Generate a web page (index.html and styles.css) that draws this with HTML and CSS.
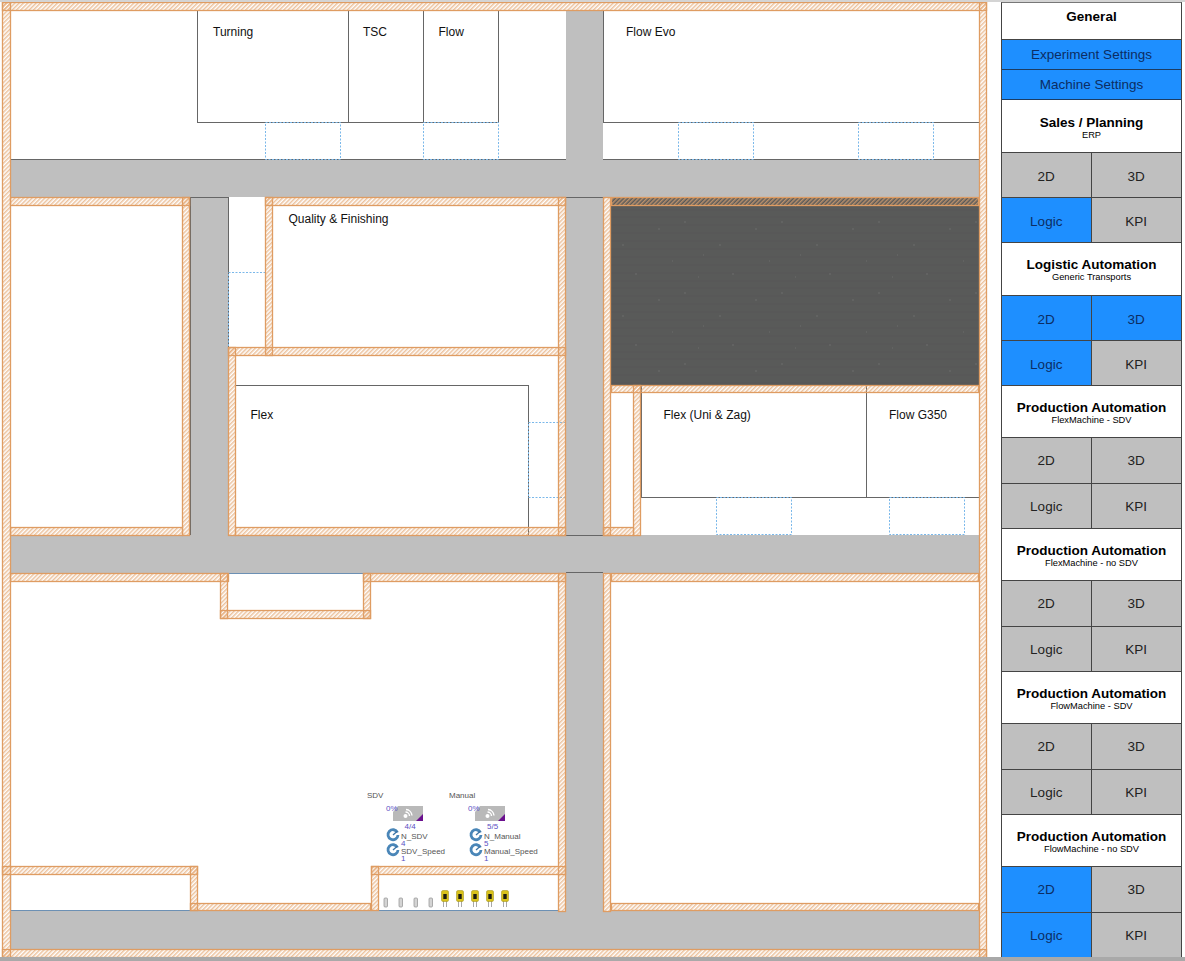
FILE: index.html
```html
<!DOCTYPE html>
<html lang="en">
<head>
<meta charset="utf-8">
<title>Factory model</title>
<link rel="stylesheet" href="styles.css">
</head>
<body>
<div class="top-strip"></div>
<main class="app">
  <svg class="plan" width="1001" height="955" viewBox="0 2 1001 955" xmlns="http://www.w3.org/2000/svg">
    <defs>
      <pattern id="hatch" width="3" height="3" patternUnits="userSpaceOnUse" patternTransform="rotate(45)">
        <rect width="1.5" height="3" class="hatch-line"/>
      </pattern>
      <pattern id="grain" width="97" height="71" patternUnits="userSpaceOnUse">
        <rect width="97" height="71" class="grain-bg"/>
        <path d="M0 4H97M0 12H97M0 20H97M0 28H97M0 36H97M0 44H97M0 52H97M0 60H97M0 68H97" class="grain-dark"/>
        <path d="M6 8v2M41 31v2M77 15v2M54 60v2M24 42h1M90 48h1M19 64h1" class="grain-light"/>
      </pattern>
      <g id="block">
        <polygon points="398,806 423,806 423,821 393,821 393,812" class="block-body"/>
        <polygon points="423,814 423,821 416,821" class="block-corner"/>
        <circle cx="405.500" cy="816" r="2" class="block-mark"/>
        <path d="M405.500 812a4 4 0 0 1 4 4M406 809.500a6.500 6.500 0 0 1 6 6" class="block-wave"/>
      </g>
      <g id="gauge">
        <path d="M397.500 832.500a5 5 0 1 0 .5 2.500" class="gauge-ring"/>
        <path d="M393 835l4.500-4" class="gauge-hand"/>
      </g>
      <g id="part-small">
        <rect x="384" y="898" width="3.500" height="9" rx="1" class="part-small"/>
      </g>
      <g id="part-yellow">
        <path d="M443.500 901v6M446.500 901v6" class="part-leg"/>
        <rect x="441.500" y="890.500" width="7" height="11" rx="1.500" class="part-body"/>
        <rect x="443.300" y="894" width="3.400" height="5" class="part-core"/>
      </g>
    </defs>

    <rect x="2" y="2" width="985" height="955" class="floor"/>

    <g class="roads">
      <rect x="566" y="10" width="37" height="150"/>
      <rect x="10" y="160" width="969" height="37"/>
      <rect x="190" y="197" width="38" height="338"/>
      <rect x="566" y="197" width="37" height="338"/>
      <rect x="10" y="535" width="969" height="38"/>
      <rect x="566" y="573" width="37" height="338"/>
      <rect x="10" y="911" width="969" height="38"/>
    </g>
    <path d="M10 159.500H566M603 159.500H979M190 197.500H228M566 197.500H603M566 535.500H603M566 572.500H603M190.500 197V535M228.500 197V347" class="road-edge"/>
    <path d="M10 910.500H190M379 910.500H558M228 573.500H363M10.500 874V911" class="blue-edge"/>

    <rect x="611" y="197" width="368" height="188" fill="url(#grain)"/>

    <g class="machines">
      <rect x="197.500" y="10.500" width="151" height="112"/>
      <rect x="348.500" y="10.500" width="75" height="112"/>
      <rect x="423.500" y="10.500" width="75" height="112"/>
      <rect x="603.500" y="10.500" width="376" height="112"/>
      <rect x="235.500" y="385.500" width="293" height="150"/>
      <rect x="641.500" y="385.500" width="225" height="112"/>
      <rect x="866.500" y="385.500" width="113" height="112"/>
    </g>

    <g class="docks">
      <rect x="265.500" y="122.500" width="75" height="37"/>
      <rect x="423.500" y="122.500" width="75" height="37"/>
      <rect x="678.500" y="122.500" width="75" height="37"/>
      <rect x="858.500" y="122.500" width="75" height="37"/>
      <rect x="228.500" y="272.500" width="37" height="75"/>
      <rect x="528.500" y="422.500" width="37" height="75"/>
      <rect x="716.500" y="497.500" width="75" height="37"/>
      <rect x="889.500" y="497.500" width="75" height="37"/>
    </g>

    <g class="walls" fill="url(#hatch)">
      <rect x="2.500" y="2.500" width="984" height="8"/>
      <rect x="2.500" y="2.500" width="8" height="955"/>
      <rect x="979.500" y="2.500" width="7" height="955"/>
      <rect x="2.500" y="949.500" width="984" height="8"/>
      <rect x="10.500" y="197.500" width="179" height="8"/>
      <rect x="182.500" y="197.500" width="7" height="338"/>
      <rect x="265.500" y="197.500" width="7" height="158"/>
      <rect x="265.500" y="197.500" width="300" height="8"/>
      <rect x="228.500" y="347.500" width="337" height="8"/>
      <rect x="228.500" y="347.500" width="7" height="188"/>
      <rect x="558.500" y="197.500" width="7" height="338"/>
      <rect x="603.500" y="197.500" width="7" height="338"/>
      <rect x="611.500" y="197.500" width="367" height="8"/>
      <rect x="611.500" y="385.500" width="367" height="7"/>
      <rect x="633.500" y="385.500" width="7" height="150"/>
      <rect x="603.500" y="527.500" width="30" height="8"/>
      <rect x="10.500" y="527.500" width="172" height="8"/>
      <rect x="235.500" y="527.500" width="330" height="8"/>
      <rect x="10.500" y="573.500" width="218" height="8"/>
      <rect x="363.500" y="573.500" width="202" height="8"/>
      <rect x="220.500" y="573.500" width="7" height="45"/>
      <rect x="363.500" y="573.500" width="7" height="45"/>
      <rect x="220.500" y="610.500" width="150" height="8"/>
      <rect x="558.500" y="573.500" width="7" height="338"/>
      <rect x="603.500" y="573.500" width="7" height="338"/>
      <rect x="611.500" y="573.500" width="367" height="8"/>
      <rect x="611.500" y="903.500" width="367" height="7"/>
      <rect x="2.500" y="866.500" width="195" height="8"/>
      <rect x="190.500" y="866.500" width="7" height="44"/>
      <rect x="190.500" y="903.500" width="180" height="7"/>
      <rect x="371.500" y="866.500" width="7" height="44"/>
      <rect x="371.500" y="866.500" width="194" height="8"/>
    </g>

    <g class="labels">
      <text x="213" y="36">Turning</text>
      <text x="363" y="36">TSC</text>
      <text x="438.500" y="36">Flow</text>
      <text x="626" y="36">Flow Evo</text>
      <text x="288.500" y="223">Quality &amp; Finishing</text>
      <text x="250.500" y="419">Flex</text>
      <text x="663.500" y="419">Flex (Uni &amp; Zag)</text>
      <text x="889" y="419">Flow G350</text>
    </g>

    <use href="#block"/>
    <use href="#block" x="82"/>
    <use href="#gauge"/>
    <use href="#gauge" y="15"/>
    <use href="#gauge" x="83"/>
    <use href="#gauge" x="83" y="15"/>

    <g class="small-labels">
      <text x="367" y="798">SDV</text>
      <text x="449" y="798">Manual</text>
      <text x="401" y="839">N_SDV</text>
      <text x="401" y="854">SDV_Speed</text>
      <text x="484" y="839">N_Manual</text>
      <text x="484" y="854">Manual_Speed</text>
    </g>
    <g class="values">
      <text x="386" y="811">0%</text>
      <text x="468" y="811">0%</text>
      <text x="404.500" y="828.500">4/4</text>
      <text x="487" y="828.500">5/5</text>
      <text x="401" y="846">4</text>
      <text x="401" y="861">1</text>
      <text x="484" y="846">5</text>
      <text x="484" y="861">1</text>
    </g>

    <use href="#part-small"/>
    <use href="#part-small" x="15"/>
    <use href="#part-small" x="30"/>
    <use href="#part-small" x="45"/>
    <use href="#part-yellow"/>
    <use href="#part-yellow" x="15"/>
    <use href="#part-yellow" x="30"/>
    <use href="#part-yellow" x="45"/>
    <use href="#part-yellow" x="60"/>
  </svg>

  <aside class="panel">
    <header class="head head-general"><strong>General</strong></header>
    <div class="wide on">Experiment Settings</div>
    <div class="wide on">Machine Settings</div>

    <header class="head"><strong class="nudge">Sales / Planning</strong><small>ERP</small></header>
    <div class="views">
      <div class="cell">2D</div><div class="cell">3D</div>
      <div class="cell on">Logic</div><div class="cell">KPI</div>
    </div>

    <header class="head"><strong>Logistic Automation</strong><small>Generic Transports</small></header>
    <div class="views">
      <div class="cell on">2D</div><div class="cell on">3D</div>
      <div class="cell on">Logic</div><div class="cell">KPI</div>
    </div>

    <header class="head head-prod"><strong>Production Automation</strong><small>FlexMachine - SDV</small></header>
    <div class="views views-prod">
      <div class="cell">2D</div><div class="cell">3D</div>
      <div class="cell">Logic</div><div class="cell">KPI</div>
    </div>

    <header class="head head-prod"><strong>Production Automation</strong><small>FlexMachine - no SDV</small></header>
    <div class="views views-prod">
      <div class="cell">2D</div><div class="cell">3D</div>
      <div class="cell">Logic</div><div class="cell">KPI</div>
    </div>

    <header class="head head-prod"><strong>Production Automation</strong><small>FlowMachine - SDV</small></header>
    <div class="views views-prod">
      <div class="cell">2D</div><div class="cell">3D</div>
      <div class="cell">Logic</div><div class="cell">KPI</div>
    </div>

    <header class="head head-prod"><strong>Production Automation</strong><small>FlowMachine - no SDV</small></header>
    <div class="views views-prod">
      <div class="cell on">2D</div><div class="cell">3D</div>
      <div class="cell on">Logic</div><div class="cell">KPI</div>
    </div>
  </aside>
</main>
<div class="bottom-strip"></div>
</body>
</html>
```
FILE: styles.css
```css
html, body {
  margin: 0;
  padding: 0;
  background: #fff;
  overflow: hidden;
}

body {
  height: 961px;
  display: flex;
  flex-direction: column;
  font-family: "Liberation Sans", Arial, sans-serif;
}

.top-strip {
  height: 2px;
  background: #d4d4d4;
}

.bottom-strip {
  height: 4px;
  background: #a9a9a9;
}

.app {
  height: 955px;
  display: flex;
  align-items: flex-start;
}

.plan {
  flex: none;
  display: block;
}

/* floor plan */
.floor { fill: #fff; }
.roads rect { fill: #bfbfbf; }
.road-edge { fill: none; stroke: #666; stroke-width: 1; }
.blue-edge { fill: none; stroke: #6c90b4; stroke-width: 1.200; }
.machines rect { fill: none; stroke: #666; stroke-width: 1; }
.docks rect { fill: none; stroke: #7ab8ea; stroke-width: 1; stroke-dasharray: 2 1.500; }
.walls rect { stroke: #df9c62; stroke-width: 1.300; }
.hatch-line { fill: #e4a873; fill-opacity: .7; }
.grain-bg { fill: #595a59; }
.grain-dark { fill: none; stroke: #525352; stroke-width: 1; stroke-opacity: .5; }
.grain-light { fill: none; stroke: #6b6c6b; stroke-width: 1; }

.labels text {
  font-size: 12px;
  fill: #111;
  font-family: "Liberation Sans", Arial, sans-serif;
}

.small-labels text,
.values text {
  font-size: 8px;
  font-family: "Liberation Sans", Arial, sans-serif;
}

.small-labels text { fill: #555; }
.values text { fill: #5a4fc4; }

.block-body { fill: #b9b9b9; }
.block-corner { fill: #6a0f8e; }
.block-mark { fill: #fff; }
.block-wave { fill: none; stroke: #fff; stroke-width: 1.400; }
.gauge-ring { fill: none; stroke: #4a86b8; stroke-width: 2.800; }
.gauge-hand { fill: none; stroke: #3f76a6; stroke-width: 1.300; }
.part-small { fill: #d4d4d4; stroke: #8f8f8f; stroke-width: .7; }
.part-leg { fill: none; stroke: #a8a8a8; stroke-width: 1; }
.part-body { fill: #d9c21c; stroke: #9a8c14; stroke-width: .5; }
.part-core { fill: #1d1d12; }

/* side panel */
.panel {
  flex: none;
  width: 181px;
  height: 955px;
  overflow: hidden;
  display: flex;
  flex-direction: column;
  box-sizing: border-box;
  border-left: 1px solid #444;
  border-right: 1px solid #444;
  border-top: 1px solid #777;
  background: #fff;
  color: #222;
  font-size: 13.5px;
}

.head {
  height: 53px;
  flex: none;
  box-sizing: border-box;
  padding-top: 14px;
  display: flex;
  flex-direction: column;
  align-items: center;
  line-height: 16px;
  border-bottom: 1px solid #444;
  color: #000;
}

.head strong {
  font-size: 13.5px;
  font-weight: 700;
}

.head small {
  font-size: 9.300px;
  font-weight: 400;
  line-height: 8px;
}

.head-general {
  height: 37px;
  padding-top: 6px;
}

.head-prod {
  height: 52px;
}

.nudge {
  padding-top: 1px;
}

.wide {
  height: 30px;
  flex: none;
  box-sizing: border-box;
  display: flex;
  align-items: center;
  justify-content: center;
  border-bottom: 1px solid #1c3c63;
}

.views {
  flex: none;
  display: grid;
  grid-template-columns: 1fr 1fr;
  grid-auto-rows: 45px;
}

.views-prod {
  grid-template-rows: 46px 45px;
}

.cell {
  box-sizing: border-box;
  display: flex;
  align-items: center;
  justify-content: center;
  padding-top: 2px;
  background: #bfbfbf;
  border-bottom: 1px solid #444;
}

.views-prod .cell {
  padding-top: 0;
}

.cell:nth-child(odd) {
  border-right: 1px solid #444;
}

.on {
  background: #1e8fff;
  color: #0c2d63;
}
```
